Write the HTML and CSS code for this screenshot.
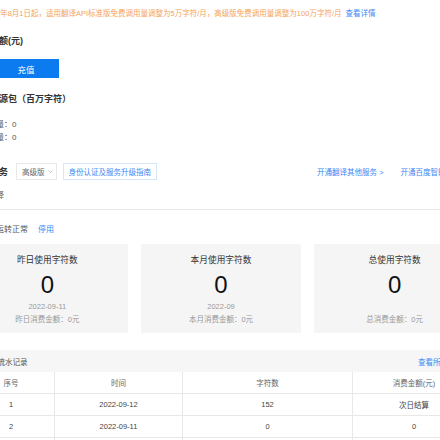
FILE: index.html
```html
<!DOCTYPE html>
<html lang="zh-CN">
<head>
<meta charset="utf-8">
<title>翻译服务</title>
<link rel="stylesheet" href="styles.css">
</head>
<body>
<div class="page">
  <p class="notice">自2022年8月1日起，适用翻译API标准版免费调用量调整为5万字符/月，高级版免费调用量调整为100万字符/月 <a class="link">查看详情</a></p>

  <h2 class="title">账户余额(元)</h2>
  <button class="btn-primary">充值</button>

  <h2 class="title">可用资源包（百万字符）</h2>
  <div class="stats">
    <p class="stat">已使用量：0</p>
    <p class="stat">总剩余量：0</p>
  </div>

  <div class="service-row">
    <h2 class="title title-inline">当前服务</h2>
    <div class="select">高级版
      <svg class="chev" width="5" height="3" viewBox="0 0 5 3"><polyline points="0.5,0.5 2.5,2.5 4.5,0.5" fill="none" stroke="#aaa" stroke-width="0.7"/></svg>
    </div>
    <a class="btn-outline">身份认证及服务升级指南</a>
    <div class="links">
      <a class="link">开通翻译其他服务 &gt;</a>
      <a class="link">开通百度智能翻译 &gt;</a>
    </div>
  </div>
  <p class="hint">服务选择</p>
  <hr class="divider">

  <p class="status">状态：运转正常<a class="link stop">停用</a></p>

  <div class="cards">
    <div class="card">
      <div class="card-title">昨日使用字符数</div>
      <div class="card-value">0</div>
      <div class="card-date">2022-09-11</div>
      <div class="card-sub">昨日消费金额：0元</div>
    </div>
    <div class="card">
      <div class="card-title">本月使用字符数</div>
      <div class="card-value">0</div>
      <div class="card-date">2022-09</div>
      <div class="card-sub">本月消费金额：0元</div>
    </div>
    <div class="card">
      <div class="card-title">总使用字符数</div>
      <div class="card-value">0</div>
      <div class="card-date"></div>
      <div class="card-sub">总消费金额：0元</div>
    </div>
  </div>

  <div class="records">
    <div class="records-head"><span>使用量流水记录</span><a class="link">查看所有记录</a></div>
    <table class="table">
      <colgroup>
        <col class="c1"><col class="c2"><col class="c3"><col class="c4">
      </colgroup>
      <thead>
        <tr><th>序号</th><th>时间</th><th>字符数</th><th>消费金额(元)</th></tr>
      </thead>
      <tbody>
        <tr><td>1</td><td>2022-09-12</td><td>152</td><td>次日结算</td></tr>
        <tr><td>2</td><td>2022-09-11</td><td>0</td><td>0</td></tr>
        <tr><td>3</td><td>2022-09-10</td><td>0</td><td>0</td></tr>
      </tbody>
    </table>
  </div>
</div>
</body>
</html>
```

FILE: styles.css
```css
html, body {
  margin: 0;
  padding: 0;
  overflow: hidden;
  background: #fff;
}
body {
  font-family: "Liberation Sans", "Noto Sans CJK SC", sans-serif;
  color: #333;
}
p { margin: 0; }
a { text-decoration: none; cursor: pointer; }

.page {
  width: 508px;
  margin-left: -33px;
}

.link { color: #3b88f5; }

.notice {
  padding: 8px 0 0 9px;
  font-size: 7.5px;
  line-height: 12px;
  color: #f5a35c;
  white-space: nowrap;
}
.notice .link { margin-left: 2px; }

.title {
  margin: 15px 0 0;
  padding-left: 5px;
  font-size: 9px;
  line-height: 12px;
  font-weight: bold;
  color: #333;
  white-space: nowrap;
}

.btn-primary {
  display: block;
  margin: 12px 0 0 26px;
  width: 66px;
  height: 19px;
  border: 0;
  padding: 0;
  background: #0c7bf0;
  color: #fff;
  font-family: inherit;
  font-size: 8.5px;
}

.stats {
  margin-top: 13px;
  padding-left: 5px;
}
.stat {
  font-size: 8px;
  line-height: 13px;
  color: #555;
}

.service-row {
  display: flex;
  align-items: center;
  margin-top: 19px;
  height: 17px;
}
.title-inline { margin: 0; }
.select {
  display: flex;
  align-items: center;
  gap: 3px;
  box-sizing: border-box;
  margin-left: 8px;
  width: 41px;
  height: 17px;
  padding: 0 0 0 5px;
  border: 1px solid #e8e8e8;
  font-size: 7.5px;
  color: #666;
  white-space: nowrap;
}
.chev { flex: none; }
.btn-outline {
  display: flex;
  align-items: center;
  box-sizing: border-box;
  margin-left: 6px;
  height: 17px;
  padding: 0 4.5px;
  border: 1px solid #d6e7fc;
  color: #3b88f5;
  font-size: 7.5px;
  white-space: nowrap;
}
.links {
  display: flex;
  gap: 17px;
  margin-left: auto;
  padding-right: 8px;
  font-size: 7.5px;
  white-space: nowrap;
}

.hint {
  margin-top: 10px;
  padding-left: 5px;
  font-size: 8px;
  line-height: 12px;
  color: #666;
}

.divider {
  margin: 7px 0 0;
  height: 0;
  border: 0;
  border-top: 1px solid #e8e8e8;
}

.status {
  margin-top: 14px;
  padding-left: 5px;
  font-size: 8px;
  line-height: 12px;
  color: #555;
  white-space: nowrap;
}
.status .stop { margin-left: 10px; }

.cards {
  display: grid;
  grid-template-columns: repeat(3, 1fr);
  gap: 13px;
  margin-top: 8px;
}
.card {
  background: #f5f5f5;
  text-align: center;
  padding: 10px 0 7px;
}
.card-title {
  font-size: 8.7px;
  line-height: 12px;
  color: #333;
}
.card-value {
  margin-top: 6px;
  font-size: 24px;
  line-height: 26px;
  color: #111;
}
.card-date {
  margin-top: 3px;
  min-height: 12px;
  font-size: 7.5px;
  line-height: 12px;
  color: #999;
}
.card-sub {
  margin-top: 1px;
  font-size: 7.5px;
  line-height: 12px;
  color: #999;
}

.records { margin-top: 17px; }
.records-head {
  display: flex;
  justify-content: space-between;
  align-items: center;
  height: 22px;
  padding: 0 12px 0 8px;
  background: #f6f6f6;
  font-size: 7.5px;
  color: #555;
}
.table {
  width: 508px;
  border-collapse: collapse;
  table-layout: fixed;
  font-size: 7.5px;
  color: #444;
}
.c1 { width: 87px; }
.c2 { width: 128px; }
.c3 { width: 170px; }
.c4 { width: 123px; }
.table th,
.table td {
  height: 21px;
  padding: 0;
  border: 1px solid #e8e8e8;
  text-align: center;
  font-weight: normal;
}
.table th { color: #666; border-top: 0; }
```
